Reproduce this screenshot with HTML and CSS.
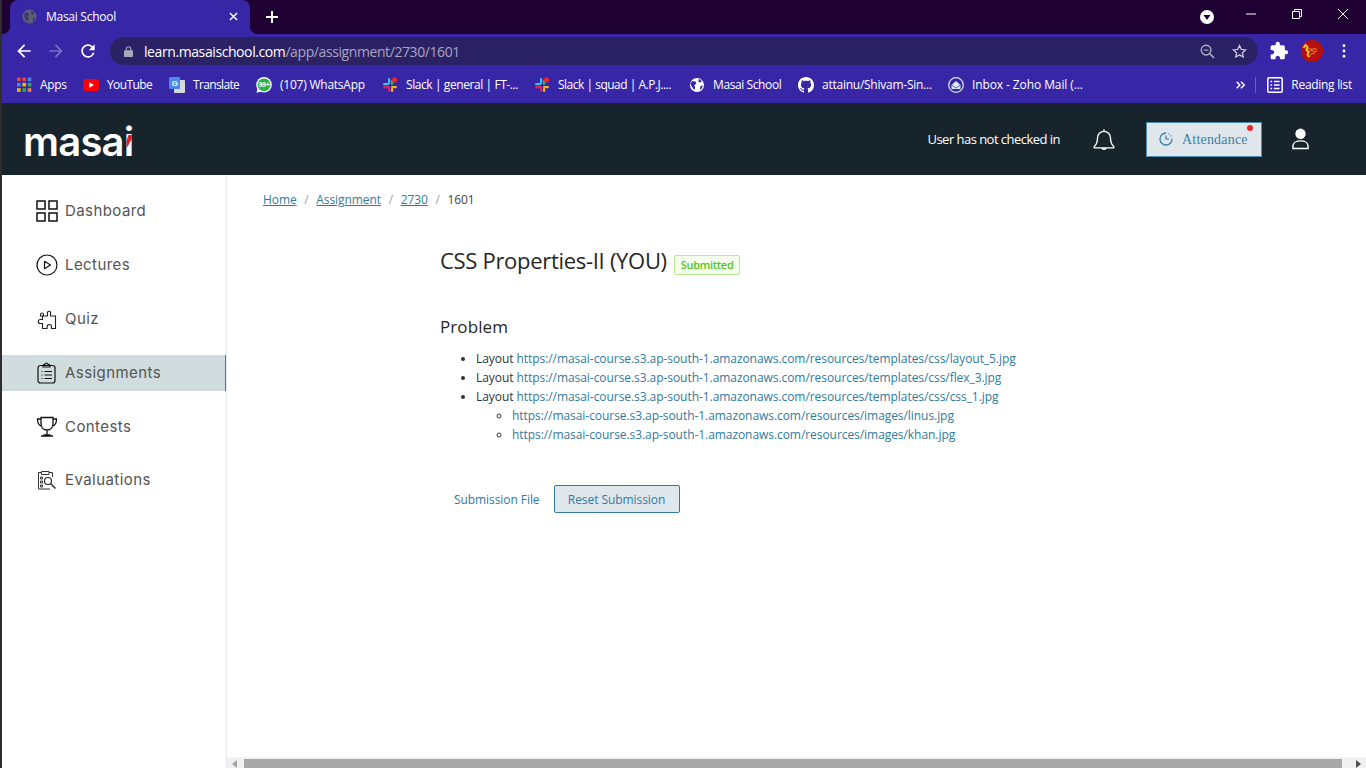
FILE: index.html
```html
<!DOCTYPE html>
<html>
<head>
  <title>Masai School</title>
  <link rel="stylesheet" href="styles.css">
</head>
<body>
  <!-- browser chrome -->
  <div class="tabstrip">
    <div class="tab">
      <svg class="favicon" viewBox="0 0 16 16"><circle cx="8" cy="8" r="7.5" fill="#5f5f78"/><path d="M3 3.5l4 .5 1 2-2 2 1 3-1 2.5L3.5 11 2 7zM10 1.5l3.5 3-2 1.5-2-1zM12 9l2-.5-1 3.5-2 1.5z" fill="#3d3a6e"/></svg>
      <span class="tab-title">Masai School</span>
      <svg class="tab-close" viewBox="0 0 10 10"><path d="M1 1l8 8M9 1l-8 8" stroke="#fff" stroke-width="1.6"/></svg>
    </div>
    <svg class="new-tab" viewBox="0 0 12 12"><path d="M6 0v12M0 6h12" stroke="#fff" stroke-width="2"/></svg>
    <div class="window-controls">
      <span class="profile-drop"><svg viewBox="0 0 14 14"><circle cx="7" cy="7" r="7" fill="#fff"/><path d="M3.5 5h7L7 10z" fill="#1f0033"/></svg></span>
      <span class="win-btn"><svg viewBox="0 0 10 10"><path d="M0 5h10" stroke="#fff"/></svg></span>
      <span class="win-btn"><svg viewBox="0 0 10 10"><path d="M.5 2.500h7v7h-7zM2.500 2.500v-2h7v7h-2" fill="none" stroke="#fff"/></svg></span>
      <span class="win-btn"><svg viewBox="0 0 10 10"><path d="M0 0l10 10M10 0L0 10" stroke="#fff"/></svg></span>
    </div>
  </div>

  <div class="toolbar">
    <span class="tool"><svg viewBox="0 0 24 24"><path fill="#fff" d="M20 11H7.83l5.59-5.59L12 4l-8 8 8 8 1.41-1.41L7.83 13H20v-2z"/></svg></span>
    <span class="tool"><svg viewBox="0 0 24 24"><path fill="#7b70c4" d="M12 4l-1.41 1.41L16.17 11H4v2h12.17l-5.58 5.59L12 20l8-8z"/></svg></span>
    <span class="tool"><svg viewBox="0 0 24 24"><path fill="#fff" d="M17.65 6.35A7.958 7.958 0 0012 4c-4.42 0-7.99 3.58-7.99 8s3.57 8 7.99 8c3.73 0 6.84-2.55 7.73-6h-2.08A5.99 5.99 0 0112 18c-3.31 0-6-2.69-6-6s2.69-6 6-6c1.66 0 3.14.69 4.22 1.78L13 11h7V4l-2.35 2.35z"/></svg></span>
    <div class="urlbar">
      <svg class="lock" viewBox="0 0 10 12"><path d="M2.500 5V3.200a2.500 2.500 0 015 0V5" fill="none" stroke="#a9a6c0" stroke-width="1.2"/><rect y="4.600" width="10" height="7.400" rx="1" fill="#a9a6c0"/></svg>
      <span class="url"><span class="url-host">learn.masaischool.com</span>/app/assignment/2730/1601</span>
      <svg class="url-icon" viewBox="0 0 16 16"><circle cx="6.500" cy="6.500" r="5.200" fill="none" stroke="#b5b3c6" stroke-width="1.400"/><path d="M10.500 10.500L15 15" stroke="#b5b3c6" stroke-width="1.600"/><path d="M4 6.500h5" stroke="#b5b3c6" stroke-width="1.200"/></svg>
      <svg class="url-icon star" viewBox="0 0 16 16"><path d="M8 1.600l1.900 4.200 4.600.5-3.400 3.100.9 4.500-4-2.300-4 2.300.9-4.500-3.400-3.100 4.600-.5z" fill="none" stroke="#c9c7d6" stroke-width="1.400"/></svg>
    </div>
    <span class="tool right"><svg viewBox="0 0 24 24"><path fill="#fff" d="M20.5 11H19V7c0-1.1-.9-2-2-2h-4V3.5C13 2.12 11.88 1 10.5 1S8 2.12 8 3.5V5H4c-1.1 0-1.99.9-1.99 2v3.8H3.5c1.49 0 2.7 1.21 2.7 2.7s-1.21 2.7-2.7 2.7H2V20c0 1.1.9 2 2 2h3.8v-1.5c0-1.49 1.21-2.7 2.7-2.7 1.49 0 2.7 1.21 2.7 2.7V22H17c1.1 0 2-.9 2-2v-4h1.5c1.38 0 2.5-1.12 2.5-2.5S21.88 11 20.5 11z"/></svg></span>
    <span class="tool avatar"><svg viewBox="0 0 22 22"><circle cx="11" cy="11" r="11" fill="#b80f0a"/><path d="M2.500 8l2-3 2 2-1 3 2 2-1 3 2 2" fill="none" stroke="#f2c230" stroke-width="2"/><path d="M7 9h9M8 12l3-2 2 2 3-1M9 15l3-2 2 1" fill="none" stroke="#f08a3c"/></svg></span>
    <span class="tool"><svg class="dots" viewBox="0 0 4 16"><circle cx="2" cy="2" r="1.600" fill="#fff"/><circle cx="2" cy="8" r="1.600" fill="#fff"/><circle cx="2" cy="14" r="1.600" fill="#fff"/></svg></span>
  </div>

  <div class="bookmarks">
    <a class="bm bm-apps"><svg viewBox="0 0 14 14"><g><rect width="3.400" height="3.400" fill="#e8453c"/><rect x="5" width="3.400" height="3.400" fill="#e8453c"/><rect x="10" width="3.400" height="3.400" fill="#4a86e8"/><rect y="5" width="3.400" height="3.400" fill="#4a86e8"/><rect x="5" y="5" width="3.400" height="3.400" fill="#f4b400"/><rect x="10" y="5" width="3.400" height="3.400" fill="#34a853"/><rect y="10" width="3.400" height="3.400" fill="#f4b400"/><rect x="5" y="10" width="3.400" height="3.400" fill="#34a853"/><rect x="10" y="10" width="3.400" height="3.400" fill="#e8853c"/></g></svg>Apps</a>
    <a class="bm bm-yt"><svg viewBox="0 0 16 12"><rect width="16" height="12" rx="3" fill="#f00"/><path d="M6.300 3.200L11 6 6.300 8.800z" fill="#fff"/></svg>YouTube</a>
    <a class="bm bm-tr"><svg viewBox="0 0 16 16"><rect x="5" y="3" width="11" height="13" rx="1" fill="#d5d7db"/><rect y="0" width="11" height="12" rx="1" fill="#4f86ec"/><text x="5.500" y="9" class="svg-g">G</text></svg>Translate</a>
    <a class="bm bm-wa"><svg viewBox="0 0 16 16"><circle cx="8" cy="7.800" r="7.800" fill="#fff"/><path d="M1.500 11.500L.5 15.800l4.300-1z" fill="#fff"/><circle cx="8" cy="7.800" r="6.400" fill="#25b244"/><text x="8" y="10.300" class="svg-wa">99+</text></svg>(107) WhatsApp</a>
    <a class="bm bm-s1"><svg viewBox="0 0 16 16"><use href="#slack"/></svg>Slack | general | FT-...</a>
    <a class="bm bm-s2"><svg viewBox="0 0 16 16"><use href="#slack"/></svg>Slack | squad | A.P.J....</a>
    <a class="bm bm-ms"><svg viewBox="0 0 16 16"><circle cx="8" cy="8" r="7" fill="#fff"/><path d="M3 4l3.500.5.800 2-2 1.800 1 2.700-1 2L3 10 1.500 7zM10 1.800l3 2.500-2 1.200-1.700-1zM11.500 9l2.300-.5-1 3-2 1.500z" fill="#3726a6"/></svg>Masai School</a>
    <a class="bm bm-gh"><svg viewBox="0 0 16 16"><path fill="#fff" d="M8 0C3.58 0 0 3.58 0 8c0 3.54 2.29 6.53 5.47 7.59.4.07.55-.17.55-.38 0-.19-.01-.82-.01-1.49-2.01.37-2.53-.49-2.69-.94-.09-.23-.48-.94-.82-1.13-.28-.15-.68-.52-.01-.53.63-.01 1.08.58 1.23.82.72 1.21 1.87.87 2.33.66.07-.52.28-.87.51-1.07-1.78-.2-3.64-.89-3.64-3.95 0-.87.31-1.59.82-2.15-.08-.2-.36-1.02.08-2.12 0 0 .67-.21 2.2.82.64-.18 1.32-.27 2-.27s1.36.09 2 .27c1.53-1.04 2.2-.82 2.2-.82.44 1.1.16 1.92.08 2.12.51.56.82 1.27.82 2.15 0 3.07-1.87 3.75-3.65 3.95.29.25.54.73.54 1.48 0 1.07-.01 1.93-.01 2.2 0 .21.15.46.55.38A8.01 8.01 0 0016 8c0-4.42-3.58-8-8-8z"/></svg>attainu/Shivam-Sin...</a>
    <a class="bm bm-zo"><svg viewBox="0 0 16 16"><circle cx="8" cy="8" r="7.300" fill="none" stroke="#dfe3ea" stroke-width="1.300"/><path d="M3.500 8L8 4l4.500 4v4h-9z" fill="#dfe3ea"/><path d="M3.500 8L8 11l4.500-3" fill="none" stroke="#3c7fc0"/></svg>Inbox - Zoho Mail (...</a>
    <span class="bm-more"><svg viewBox="0 0 9 8"><path d="M.7 .8L3.800 4 .7 7.200M5 .8L8.200 4 5 7.200" fill="none" stroke="#fff" stroke-width="1.500"/></svg></span>
    <span class="bm-sep"></span>
    <a class="bm bm-rl"><svg viewBox="0 0 14 14"><rect x=".7" y=".7" width="12.600" height="12.600" rx="1" fill="none" stroke="#fff" stroke-width="1.300"/><path d="M3 4h1.500M3 7h1.500M3 10h1.500M6 4h5M6 7h5M6 10h5" stroke="#fff" stroke-width="1.300"/></svg>Reading list</a>
  </div>

  <svg class="defs" width="0" height="0"><defs><g id="slack"><rect x="1" y="6" width="6" height="2.200" rx="1.100" fill="#36c5f0"/><rect x="6" y="1" width="2.200" height="6" rx="1.100" fill="#36c5f0"/><rect x="9" y="3" width="2.200" height="5" rx="1.100" fill="#2eb67d"/><rect x="9" y="9" width="6" height="2.200" rx="1.100" fill="#ecb22e"/><rect x="9" y="11" width="2.200" height="4" rx="1.100" fill="#ecb22e"/><rect x="1" y="9" width="7" height="2.200" rx="1.100" fill="#e01e5a"/><rect x="6" y="10" width="2.200" height="5" rx="1.100" fill="#e01e5a"/><circle cx="12.500" cy="3" r="2.700" fill="#e0262e"/></g></defs></svg>

  <!-- app -->
  <header class="app-header">
    <div class="logo">masa<span class="logo-i">i</span></div>
    <div class="header-right">
      <span class="checkin">User has not checked in</span>
      <svg class="bell" viewBox="0 0 24 24"><path d="M3 19c2-2 3-3.500 3-8a6 6 0 0112 0c0 4.500 1 6 3 8 .5.700 0 1.200-.7 1.200H3.700C3 20.200 2.500 19.700 3 19zM12 5V3M10 20.500c.3 1.500 3.700 1.500 4 0" fill="none" stroke="#fff" stroke-width="1.200"/></svg>
      <button class="attendance">
        <svg viewBox="0 0 14 14"><path d="M7 1a6 6 0 106 6" fill="none" stroke="#3b7fa6" stroke-width="1.300"/><path d="M7 3.500V7h3M9.500 1.800l.8.500M11.500 3.500l.5.700M12.700 5.200h.3" fill="none" stroke="#3b7fa6" stroke-width="1.200"/></svg>
        <span class="attendance-label">Attendance</span>
        <span class="attendance-dot"></span>
      </button>
      <svg class="user" viewBox="0 0 18 23"><circle cx="9" cy="6" r="5.500" fill="#fff"/><path d="M1 21.500v-2.500c0-3.500 3.500-5.500 8-5.500s8 2 8 5.500v2.500z" fill="none" stroke="#fff" stroke-width="1.500"/></svg>
    </div>
  </header>

  <div class="layout">
    <nav class="sidebar">
      <a class="nav-item"><svg viewBox="0 0 22 22"><path d="M1 1h8v8H1zM13 1h8v8h-8zM1 13h8v8H1zM13 13h8v8h-8z" fill="none" stroke="#111" stroke-width="1.500"/></svg><span>Dashboard</span></a>
      <a class="nav-item"><svg viewBox="0 0 22 22"><circle cx="11" cy="11" r="10" fill="none" stroke="#111" stroke-width="1.200"/><path d="M8.500 7.300l6 3.700-6 3.700z" fill="none" stroke="#111" stroke-width="1.200" stroke-linejoin="round"/></svg><span>Lectures</span></a>
      <a class="nav-item"><svg viewBox="0 0 22 22"><path d="M9 8H7.500V6.500a1.500 1.500 0 00-3 0V8H7M9 8h2.500V5.800a1.700 1.700 0 113 0V8H19.500v12.500h-4v-1.800a2.200 2.200 0 00-4.400 0v1.800H6.500V15.500H4.300a2 2 0 010-4h2.200V8z" fill="none" stroke="#222" stroke-width="1.100"/></svg><span>Quiz</span></a>
      <a class="nav-item active"><svg viewBox="0 0 22 22"><rect x="2" y="3.500" width="17" height="17.500" rx="2.500" fill="none" stroke="#111" stroke-width="1.200"/><path d="M7 3.500c0-1 1-1 2-1.200.5-1.600 2.500-1.600 3 0 1 .2 2 .2 2 1.200v1.500H7zM5.500 9.500h1M5.500 13h1M5.500 16.500h1M8.500 9.500h7.500M8.500 13h7.500M8.500 16.500h7.500" fill="none" stroke="#111" stroke-width="1.100"/></svg><span>Assignments</span></a>
      <a class="nav-item"><svg viewBox="0 0 22 22"><path d="M5 1.500h12v6c0 4-2.500 6.500-6 6.500S5 11.500 5 7.500zM5 3H1.500c0 4 1 6.500 4.500 7.500M17 3h3.500c0 4-1 6.500-4.500 7.500M11 14v5M5 20h12M7.500 19h7" fill="none" stroke="#111" stroke-width="1.300"/></svg><span>Contests</span></a>
      <a class="nav-item last"><svg viewBox="0 0 22 22"><path d="M14 20H2.500V3.500h3M13 3.500h3.500V8M5.500 2.500h7.500v3H5.500zM4.500 8h2v2h-2zM4.500 12h2v2h-2zM4.500 16h2v2h-2z" fill="none" stroke="#333" stroke-width="1"/><circle cx="12" cy="12" r="3.500" fill="none" stroke="#222" stroke-width="1.100"/><path d="M14.500 14.500l5 5" stroke="#333" stroke-width="1.500"/></svg><span>Evaluations</span></a>
    </nav>

    <div class="page">
      <main class="content">
        <div class="breadcrumb">
          <a href="#">Home</a><span class="crumb-sep">/</span>
          <a href="#">Assignment</a><span class="crumb-sep">/</span>
          <a href="#">2730</a><span class="crumb-sep">/</span>
          <span class="crumb-current">1601</span>
        </div>

        <div class="assignment">
          <div class="title-row">
            <h1>CSS Properties-II (YOU)</h1>
            <span class="tag">Submitted</span>
          </div>

          <h2>Problem</h2>
          <ul class="problem-list">
            <li>Layout <a>https://masai-course.s3.ap-south-1.amazonaws.com/resources/templates/css/layout_5.jpg</a></li>
            <li>Layout <a>https://masai-course.s3.ap-south-1.amazonaws.com/resources/templates/css/flex_3.jpg</a></li>
            <li>Layout <a>https://masai-course.s3.ap-south-1.amazonaws.com/resources/templates/css/css_1.jpg</a>
              <ul>
                <li><a>https://masai-course.s3.ap-south-1.amazonaws.com/resources/images/linus.jpg</a></li>
                <li><a>https://masai-course.s3.ap-south-1.amazonaws.com/resources/images/khan.jpg</a></li>
              </ul>
            </li>
          </ul>

          <div class="actions">
            <button class="btn-link">Submission File</button>
            <button class="btn-reset">Reset Submission</button>
          </div>
        </div>
      </main>

      <div class="hscroll">
        <svg class="arrow" viewBox="0 0 5 8"><path d="M5 0v8L0 4z" fill="#a3a3a3"/></svg>
        <span class="thumb"></span>
        <svg class="arrow" viewBox="0 0 5 8"><path d="M0 0v8l5-4z" fill="#505050"/></svg>
      </div>
    </div>
  </div>
</body>
</html>
```

FILE: styles.css
```css
* {
  box-sizing: border-box;
}

html, body {
  margin: 0;
  padding: 0;
  height: 768px;
  overflow: hidden;
}

body {
  display: flex;
  flex-direction: column;
  border-left: 2px solid #2e2e2e;
  font-family: "Open Sans", sans-serif;
  background-color: #fff;
}

svg {
  display: block;
  flex-shrink: 0;
}

.defs {
  position: absolute;
}

/* tab strip */
.tabstrip {
  display: flex;
  align-items: center;
  height: 34px;
  padding-left: 8px;
  background-color: #1f0033;
}

.tab {
  position: relative;
  display: flex;
  align-items: center;
  width: 240px;
  height: 34px;
  padding: 0 12px 1px 12px;
  background-color: #3726a6;
  border-radius: 8px 8px 0 0;
}

.tab::after {
  content: "";
  position: absolute;
  right: -8px;
  bottom: 0;
  width: 8px;
  height: 8px;
  background: radial-gradient(circle at 100% 0, #1f0033 8px, #3726a6 8px);
}

.tab::before {
  content: "";
  position: absolute;
  left: -8px;
  bottom: 0;
  width: 8px;
  height: 8px;
  background: radial-gradient(circle at 0 0, #1f0033 8px, #3726a6 8px);
}

.favicon {
  width: 15px;
  height: 15px;
  margin-right: 9px;
}

.tab-title {
  flex: 1;
  color: #fff;
  font-size: 12px;
  letter-spacing: -0.27px;
}

.tab-close {
  width: 9px;
  height: 9px;
}

.new-tab {
  width: 12px;
  height: 12px;
  margin-left: 16px;
}

.window-controls {
  display: flex;
  align-items: center;
  margin-left: auto;
  height: 34px;
}

.profile-drop svg {
  width: 14px;
  height: 14px;
}

.profile-drop {
  margin-right: 14px;
}

.win-btn {
  display: flex;
  justify-content: center;
  width: 46px;
  margin-bottom: 6px;
}

.win-btn svg {
  width: 10px;
  height: 10px;
}

/* toolbar */
.toolbar {
  display: flex;
  align-items: center;
  height: 34px;
  padding: 0 6px 0 6px;
  background-color: #3726a6;
}

.tool {
  display: flex;
  align-items: center;
  justify-content: center;
  width: 32px;
  height: 32px;
}

.tool svg {
  width: 20px;
  height: 20px;
}

.tool.right {
  margin-left: 5px;
}

.tool.avatar {
  margin-left: 1px;
}

.tool.avatar svg {
  width: 22px;
  height: 22px;
}

.tool svg.dots {
  width: 4px;
  height: 14px;
}

.urlbar {
  flex: 1;
  display: flex;
  align-items: center;
  height: 28px;
  margin-left: 6px;
  padding: 0 9px 0 14px;
  background-color: #2a2264;
  border-radius: 14px;
}

.lock {
  width: 9px;
  height: 11px;
}

.url {
  flex: 1;
  margin-left: 11px;
  color: #a8a5c4;
  font-size: 14px;
  letter-spacing: -0.41px;
}

.url-host {
  color: #fff;
}

.url-icon {
  width: 15px;
  height: 15px;
  margin-right: 17px;
}

.url-icon.star {
  margin-right: 2px;
}

/* bookmarks bar */
.bookmarks {
  display: flex;
  align-items: center;
  height: 35px;
  padding-bottom: 2px;
  background-color: #3726a6;
}

.bm {
  display: flex;
  align-items: center;
  color: #fff;
  font-size: 12px;
  letter-spacing: -0.3px;
  white-space: nowrap;
}

.bm svg {
  width: 16px;
  height: 16px;
  margin-right: 8px;
}

.bm-apps { width: 66px; margin-left: 15px; }
.bm-apps svg { width: 15px; }
.bm-yt { width: 86px; letter-spacing: -0.6px; }
.bm-tr { width: 87px; letter-spacing: -0.65px; }
.bm-wa { width: 126px; letter-spacing: -0.23px; }
.bm-s1 { width: 152px; letter-spacing: -0.42px; }
.bm-s2 { width: 155px; letter-spacing: -0.5px; }
.bm-ms { width: 109px; letter-spacing: -0.4px; }
.bm-gh { width: 150px; letter-spacing: -0.25px; }
.bm-zo { letter-spacing: -0.1px; }

.bm-more {
  margin-left: auto;
}

.bm-more svg {
  width: 9px;
  height: 8px;
}

.bm-sep {
  width: 1px;
  height: 16px;
  margin: 0 11px 0 10px;
  background-color: #6a5fc0;
}

.bm-rl {
  margin-right: 14px;
}

.svg-g {
  fill: #fff;
  font-family: "Liberation Sans", sans-serif;
  font-size: 8px;
  font-weight: bold;
  text-anchor: middle;
}

.svg-wa {
  fill: #fff;
  font-family: "Liberation Sans", sans-serif;
  font-size: 7px;
  font-weight: bold;
  text-anchor: middle;
}

/* app header */
.app-header {
  display: flex;
  align-items: center;
  justify-content: space-between;
  height: 72px;
  padding: 0 57px 0 21px;
  background-color: #18242b;
}

.logo {
  padding-top: 5px;
  color: #fff;
  font-family: Inter, sans-serif;
  font-size: 40px;
  font-weight: 600;
  letter-spacing: -0.8px;
  line-height: 1;
}

.logo-i {
  position: relative;
  display: inline-block;
}

/* red wedge over the stem of the i */
.logo-i::after {
  content: "";
  position: absolute;
  right: 1px;
  top: 13px;
  width: 6px;
  height: 14px;
  background-color: #e3202a;
  clip-path: polygon(35% 0, 100% 0, 100% 25%, 0 100%, 0 50%);
}

.header-right {
  display: flex;
  align-items: center;
}

.checkin {
  color: #fff;
  font-size: 13px;
  letter-spacing: -0.53px;
}

.bell {
  width: 26px;
  height: 26px;
  margin: 0 29px 0 31px;
}

.attendance {
  position: relative;
  display: flex;
  align-items: center;
  gap: 9px;
  width: 116px;
  height: 35px;
  padding: 0 0 0 12px;
  background-color: #dfe7ed;
  border: 1px solid #4d8fb3;
  color: #3b7fa6;
  font-family: "Liberation Serif", serif;
  font-size: 14px;
  letter-spacing: 0.2px;
}

.attendance svg {
  width: 14px;
  height: 14px;
}

.attendance-label {
  padding-top: 1px;
}

.attendance-dot {
  position: absolute;
  top: 2px;
  right: 8px;
  width: 6px;
  height: 6px;
  background-color: #e5262d;
  border-radius: 50%;
}

.user {
  width: 17px;
  height: 22px;
  margin-left: 30px;
}

/* sidebar + page */
.layout {
  flex: 1;
  display: flex;
  min-height: 0;
}

.sidebar {
  display: flex;
  flex-direction: column;
  gap: 18px;
  width: 225px;
  padding-top: 18px;
  border-right: 1px solid #e8ebf5;
}

.nav-item {
  display: flex;
  align-items: center;
  height: 36px;
  padding-left: 34px;
  color: #555;
  font-family: Inter, sans-serif;
  font-size: 15px;
  letter-spacing: 0.43px;
}

.nav-item span {
  margin-bottom: 2px;
}

.nav-item svg {
  width: 22px;
  height: 22px;
  margin-right: 7px;
}

.nav-item.active {
  background-color: #d0dcdd;
  border-right: 1px solid #3b7ca3;
}

.nav-item.last {
  margin-top: -1px;
}

.page {
  flex: 1;
  display: flex;
  flex-direction: column;
  min-width: 0;
}

.content {
  flex: 1;
  padding: 16px 0 0 36px;
}

.breadcrumb {
  display: flex;
  align-items: center;
  height: 17px;
  font-size: 12px;
  letter-spacing: -0.08px;
}

.breadcrumb a {
  color: #2f7b9e;
  text-decoration: underline;
}

.crumb-sep {
  margin: 0 7.700px;
  color: #a0a0a0;
}

.crumb-current {
  color: #444;
}

.assignment {
  margin-left: 177px;
}

.title-row {
  display: flex;
  align-items: center;
  gap: 7px;
  margin-top: 37px;
}

h1 {
  margin: 0;
  color: #262626;
  font-size: 22px;
  font-weight: 400;
  line-height: 30px;
  letter-spacing: -0.3px;
}

.tag {
  height: 20px;
  margin-top: 10px;
  padding: 0 6px;
  background-color: #f6ffed;
  border: 1px solid #b7eb8f;
  border-radius: 2px;
  color: #52c41a;
  font-size: 11px;
  font-weight: 600;
  line-height: 18px;
  letter-spacing: -0.3px;
}

h2 {
  margin: 40px 0 0;
  color: #262626;
  font-size: 17px;
  font-weight: 400;
  line-height: 24px;
  letter-spacing: 0.1px;
}

.problem-list {
  margin: 10px 0 0;
  padding-left: 36px;
  color: #333;
  font-size: 12px;
  line-height: 19px;
  letter-spacing: -0.06px;
}

.problem-list ul {
  margin: 0;
  padding-left: 36px;
}

.problem-list a {
  color: #2f7b9e;
}

.actions {
  display: flex;
  align-items: center;
  margin-top: 41px;
}

.actions button {
  padding-top: 2px;
  font-family: "Open Sans", sans-serif;
  font-size: 12px;
  letter-spacing: -0.07px;
}

.btn-link {
  height: 28px;
  padding-right: 14px;
  padding-left: 14px;
  background: none;
  border: none;
  color: #2f7b9e;
}

.btn-reset {
  width: 126px;
  height: 28px;
  padding-right: 0;
  padding-left: 0;
  background-color: #dfe7ed;
  border: 1px solid #2f7b9e;
  border-radius: 2px;
  color: #2f7b9e;
}

/* fake horizontal scrollbar */
.hscroll {
  display: flex;
  align-items: center;
  height: 11px;
  padding-top: 2px;
  background-color: #f1f1f1;
}

.arrow {
  width: 5px;
  height: 8px;
}

.arrow:first-child {
  margin: 0 7px 0 5px;
}

.arrow:last-child {
  margin: 0 5px 0 14px;
}

.thumb {
  flex: 1;
  height: 9px;
  background-color: #a8a8a8;
}
```
